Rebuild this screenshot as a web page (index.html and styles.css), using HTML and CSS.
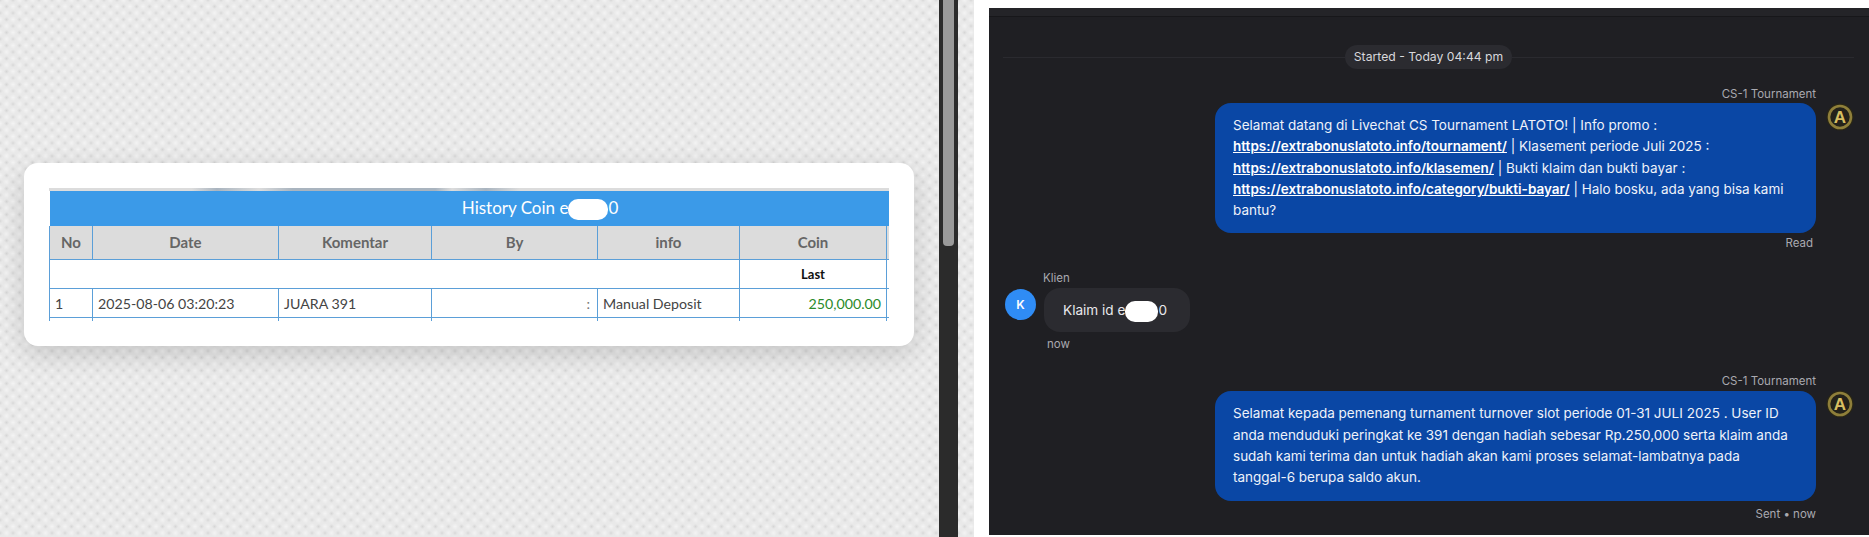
FILE: index.html
```html
<!doctype html>
<html lang="en">
  <head>
    <meta charset="UTF-8" />
    <meta name="viewport" content="width=device-width, initial-scale=1.0" />
    <title>History Coin</title>
    <link rel="stylesheet" href="styles.css">
  </head>
  <body>
    <section class="history-pane">
      <div class="card">
        <div class="table-clip">
          <div class="table-strip"></div>
          <table class="history-table">
            <colgroup>
              <col class="col-no" />
              <col class="col-date" />
              <col class="col-comment" />
              <col class="col-by" />
              <col class="col-info" />
              <col class="col-coin" />
              <col class="col-rest" />
            </colgroup>
            <thead>
              <tr>
                <th class="title-cell" colspan="7">History Coin e<span class="redact-title"></span>0</th>
              </tr>
              <tr class="head-row">
                <th>No</th>
                <th>Date</th>
                <th>Komentar</th>
                <th>By</th>
                <th>info</th>
                <th>Coin</th>
                <th></th>
              </tr>
            </thead>
            <tbody>
              <tr class="last-row">
                <td colspan="5"></td>
                <td class="last-label">Last</td>
                <td></td>
              </tr>
              <tr class="data-row">
                <td>1</td>
                <td>2025-08-06 03:20:23</td>
                <td>JUARA 391</td>
                <td class="by-cell">:</td>
                <td>Manual Deposit</td>
                <td class="coin-cell">250,000.00</td>
                <td></td>
              </tr>
              <tr class="cut-row">
                <td></td><td></td><td></td><td></td><td></td><td></td><td></td>
              </tr>
            </tbody>
          </table>
        </div>
      </div>
    </section>

    <div class="scrollbar"><div class="scroll-thumb"></div></div>
    <div class="texture-strip"></div>

    <section class="chat-wrap">
      <div class="chat">
        <div class="chat-top"></div>

        <div class="divider">
          <span class="divider-line"></span>
          <span class="divider-pill">Started - Today 04:44 pm</span>
          <span class="divider-line"></span>
        </div>

        <div class="msg-out first-out">
          <div class="msg-body">
            <div class="msg-name">CS-1 Tournament</div>
            <div class="bubble-out">
              Selamat datang di Livechat CS Tournament LATOTO! | Info promo :
              <a href="#">https://extrabonuslatoto.info/tournament/</a> | Klasement periode Juli 2025 :
              <a href="#">https://extrabonuslatoto.info/klasemen/</a> | Bukti klaim dan bukti bayar :
              <a href="#">https://extrabonuslatoto.info/category/bukti-bayar/</a> | Halo bosku, ada yang bisa kami bantu?
            </div>
            <div class="msg-status">Read</div>
          </div>
          <svg class="agent-logo" viewBox="0 0 28 28">
            <circle cx="14" cy="14" r="13.5" fill="#2a2716" />
            <circle cx="14" cy="14" r="11" fill="#24221a" stroke="#8f7f3a" stroke-width="2.6" />
            <text class="agent-letter" x="14" y="20" text-anchor="middle">A</text>
          </svg>
        </div>

        <div class="msg-in">
          <div class="msg-name-in">Klien</div>
          <div class="msg-in-row">
            <div class="client-avatar">K</div>
            <div class="bubble-in">Klaim id e<span class="redact-chat"></span>0</div>
          </div>
          <div class="msg-time">now</div>
        </div>

        <div class="msg-out second-out">
          <div class="msg-body">
            <div class="msg-name">CS-1 Tournament</div>
            <div class="bubble-out">
              Selamat kepada pemenang turnament turnover slot periode 01-31 JULI 2025 . User ID
              anda menduduki peringkat ke 391 dengan hadiah sebesar Rp.250,000 serta klaim anda
              sudah kami terima dan untuk hadiah akan kami proses selamat-lambatnya pada
              tanggal-6 berupa saldo akun.
            </div>
            <div class="msg-status">Sent &bull; now</div>
          </div>
          <svg class="agent-logo" viewBox="0 0 28 28">
            <circle cx="14" cy="14" r="13.5" fill="#2a2716" />
            <circle cx="14" cy="14" r="11" fill="#24221a" stroke="#8f7f3a" stroke-width="2.6" />
            <text class="agent-letter" x="14" y="20" text-anchor="middle">A</text>
          </svg>
        </div>
      </div>
    </section>
  </body>
</html>
```

FILE: styles.css
```css
:root {
  --tex-base: #e9e9e9;
  --tex-dot: #d6d6d6;
  --cell-border: #5b9fd8;
  --chat-bg: #1f1f23;
  --chat-soft: #2b2b30;
  --chat-muted: #a9a9b0;
  --bubble-blue: #0a47a5;
}

* {
  margin: 0;
  padding: 0;
  box-sizing: border-box;
}

html,
body {
  height: 537px;
  overflow: hidden;
}

body {
  display: flex;
  width: 1869px;
  background-color: #fff;
  font-family: 'Inter', 'Liberation Sans', sans-serif;
}

.history-pane,
.texture-strip {
  background-color: var(--tex-base);
  background-image:
    radial-gradient(circle at 50% 50%, var(--tex-dot) 0, rgba(214, 214, 214, 0) 2.5px),
    radial-gradient(circle at 50% 50%, var(--tex-dot) 0, rgba(214, 214, 214, 0) 2.5px),
    radial-gradient(circle at 50% 50%, #f4f4f4 0, rgba(244, 244, 244, 0) 3.5px),
    radial-gradient(circle at 50% 50%, #f4f4f4 0, rgba(244, 244, 244, 0) 3.5px);
  background-size: 13px 13px;
  background-position: 0 0, 6.5px 6.5px, 6.5px 0, 0 6.5px;
}

.history-pane {
  width: 939px;
  padding: 163px 0 0 24px;
}

.card {
  width: 890px;
  height: 183px;
  padding: 25px 25px 0 25px;
  background-color: #fff;
  border-radius: 14px;
  box-shadow: 0 8px 26px rgba(0, 0, 0, 0.16);
}

.table-clip {
  width: 840px;
  height: 133px;
  overflow: hidden;
}

.table-strip {
  height: 3px;
  background: linear-gradient(90deg, #dcdcdc 0, #dcdcdc 17%, #a9b4bf 20%, #dcdcdc 25%, #a9b4bf 29%, #a9b4bf 46%, #dcdcdc 48%, #a9b4bf 52%, #dcdcdc 56%, #dcdcdc 100%);
}

.history-table {
  width: 840px;
  table-layout: fixed;
  border-collapse: collapse;
  font-family: 'Lato', 'Liberation Sans', sans-serif;
  font-size: 14.2px;
  color: #444;
}

.col-no { width: 43px; }
.col-date { width: 186px; }
.col-comment { width: 153px; }
.col-by { width: 166px; }
.col-info { width: 142px; }
.col-coin { width: 147px; }
.col-rest { width: 3px; }

.title-cell {
  height: 35px;
  padding-left: 141px;
  background-color: #3b9ae8;
  color: #fff;
  font-size: 17px;
  font-weight: 400;
  text-align: center;
}

.redact-title {
  display: inline-block;
  width: 40px;
  height: 21px;
  vertical-align: middle;
  background-color: #fff;
  border-radius: 10px;
}

.head-row th {
  height: 33px;
  background-color: #dcdcdc;
  color: #666;
  font-size: 15px;
  font-weight: 700;
  border: 1px solid var(--cell-border);
  border-top: 0;
}

.last-row td,
.data-row td,
.cut-row td {
  border: 1px solid var(--cell-border);
}

.last-row td {
  height: 29px;
}

.last-label {
  color: #111;
  font-size: 13px;
  font-weight: 700;
  text-align: center;
}

.data-row td {
  height: 29px;
  padding: 2px 5px 0;
}

.data-row .by-cell {
  padding-right: 7px;
  text-align: right;
  color: #777;
}

.coin-cell {
  text-align: right;
  color: #2a8a2a;
}

.cut-row td {
  height: 20px;
  border-top-color: #a8cbe8;
}

.scrollbar {
  width: 19px;
  padding: 0 4px;
  background-color: #2b2b2b;
}

.scroll-thumb {
  height: 246px;
  background-color: #9a9a9a;
  border-radius: 0 0 4px 4px;
}

.texture-strip {
  width: 16px;
}

.chat-wrap {
  width: 895px;
  padding: 8px 0 2px 15px;
  background-color: #fff;
}

.chat {
  height: 527px;
  padding: 0 15px 0 16px;
  background-color: var(--chat-bg);
}

.chat-top {
  height: 9px;
  margin: 0 -15px 0 -16px;
  border-bottom: 1px solid #17171a;
  background-color: #242428;
}

.divider {
  display: flex;
  align-items: center;
  height: 24px;
  margin: 28px 0 0 -2px;
}

.divider-line {
  flex: 1;
  height: 1px;
  background-color: #2a2a2f;
}

.divider-pill {
  padding: 0 9px;
  height: 24px;
  line-height: 24px;
  border-radius: 12px;
  background-color: var(--chat-soft);
  color: #d8d8dc;
  font-size: 12.2px;
  white-space: nowrap;
}

.msg-out {
  display: flex;
  justify-content: flex-end;
  gap: 10px;
}

.first-out {
  margin-top: 17px;
}

.second-out {
  margin-top: 21px;
}

.msg-body {
  width: 601px;
}

.msg-name {
  height: 16px;
  line-height: 16px;
  margin-bottom: 1px;
  text-align: right;
  color: var(--chat-muted);
  font-size: 11.5px;
}

.second-out .msg-name {
  margin-bottom: 2px;
}

.bubble-out {
  padding: 12px 24px 12px 18px;
  border-radius: 16px;
  background-color: var(--bubble-blue);
  color: #eef2fa;
  font-size: 13.5px;
  line-height: 21.3px;
}

.bubble-out a {
  color: #fff;
  font-weight: 600;
  text-decoration: underline;
}

.msg-status {
  height: 16px;
  line-height: 16px;
  margin-top: 2px;
  padding-right: 3px;
  text-align: right;
  color: var(--chat-muted);
  font-size: 11.5px;
}

.second-out .msg-status {
  margin-top: 5px;
  padding-right: 0;
}

.agent-logo {
  flex: none;
  width: 28px;
  height: 28px;
  margin-top: 17px;
}

.agent-letter {
  fill: #d8bf62;
  font-family: 'Liberation Sans', sans-serif;
  font-size: 17px;
  font-weight: 700;
}

.msg-in {
  margin-top: 19px;
}

.msg-name-in {
  height: 16px;
  line-height: 16px;
  margin: 0 0 2px 38px;
  color: var(--chat-muted);
  font-size: 11.5px;
}

.msg-in-row {
  display: flex;
  gap: 8px;
}

.client-avatar {
  flex: none;
  width: 31px;
  height: 31px;
  margin-top: 1px;
  border-radius: 50%;
  background-color: #2f8cf5;
  color: #fff;
  font-size: 12px;
  font-weight: 600;
  line-height: 31px;
  text-align: center;
}

.bubble-in {
  width: 146px;
  height: 44px;
  padding-left: 19px;
  border-radius: 16px;
  background-color: var(--chat-soft);
  color: #e8e8ec;
  font-size: 13.6px;
  line-height: 44px;
  white-space: nowrap;
}

.redact-chat {
  display: inline-block;
  width: 33px;
  height: 21px;
  vertical-align: middle;
  background-color: #fff;
  border-radius: 10px;
}

.msg-time {
  height: 16px;
  line-height: 16px;
  margin: 4px 0 0 42px;
  color: var(--chat-muted);
  font-size: 11.5px;
}
```
